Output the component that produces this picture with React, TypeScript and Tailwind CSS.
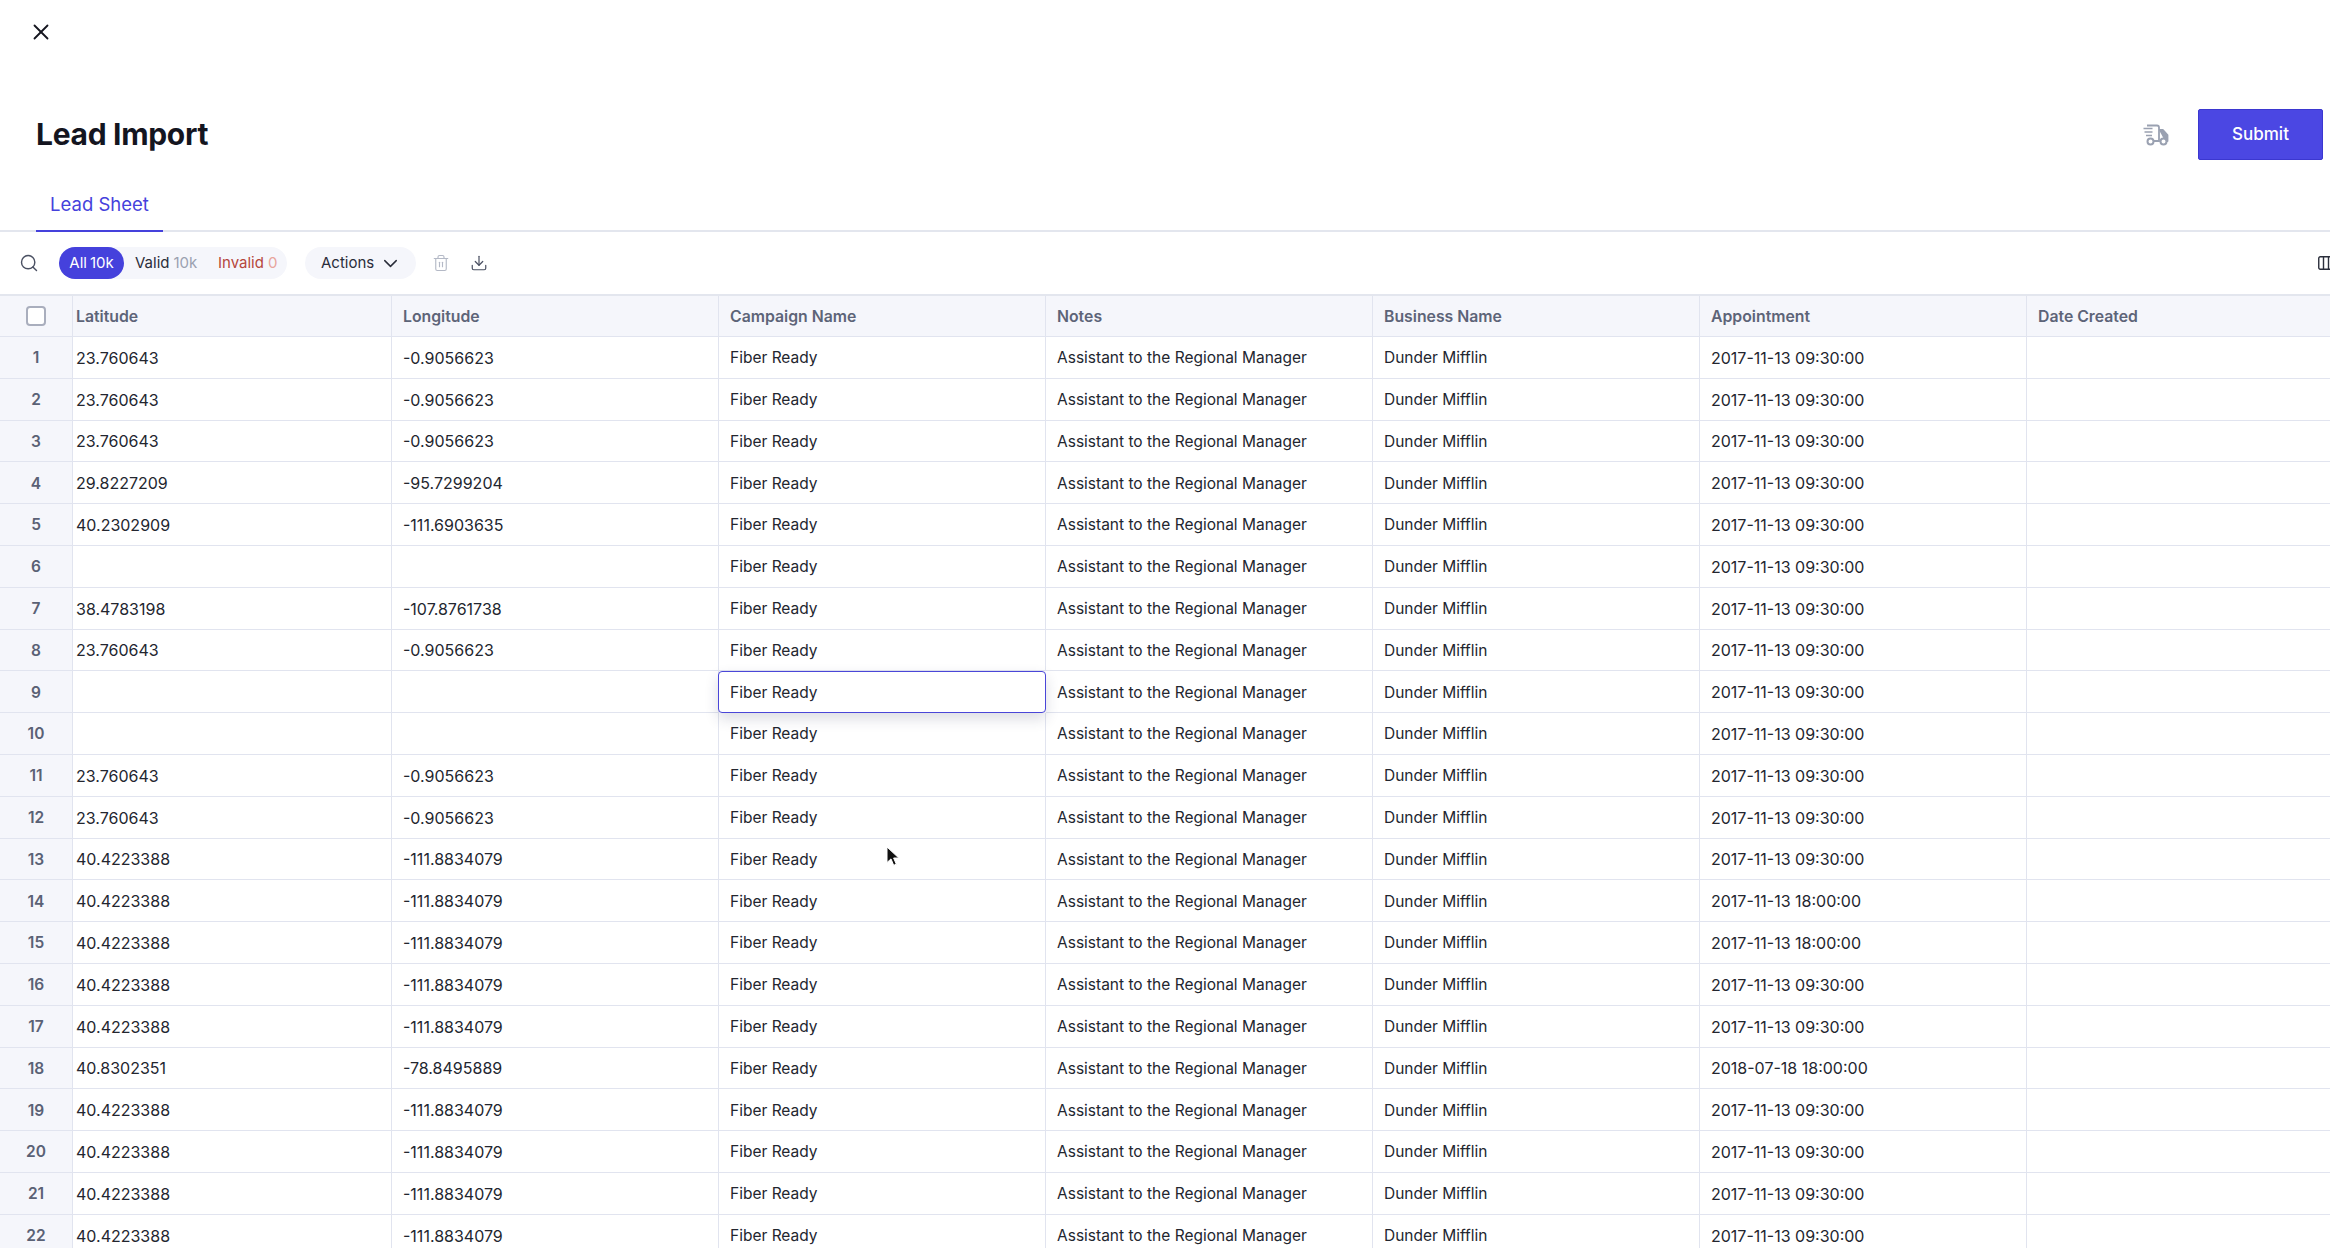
import { ChevronDown, Download, Search, Trash2, X } from "lucide-react";

const columns = [
  "Latitude",
  "Longitude",
  "Campaign Name",
  "Notes",
  "Business Name",
  "Appointment",
  "Date Created",
];

const GRID = "grid shrink-0 grid-cols-[73px_319px_repeat(6,327px)] w-[2354px]";
const SELECTED_ROW = 9;

const a = ["23.760643", "-0.9056623"];
const b = ["40.4223388", "-111.8834079"];
const none = ["", ""];
const coords = [
  a, a, a,
  ["29.8227209", "-95.7299204"],
  ["40.2302909", "-111.6903635"],
  none,
  ["38.4783198", "-107.8761738"],
  a, none, none, a, a,
  b, b, b, b, b,
  ["40.8302351", "-78.8495889"],
  b, b, b, b,
];

function appointmentFor(n: number) {
  if (n === 14 || n === 15) return "2017-11-13 18:00:00";
  if (n === 18) return "2018-07-18 18:00:00";
  return "2017-11-13 09:30:00";
}

function TruckIcon() {
  return (
    <svg width="26" height="22" viewBox="0 0 26 22" fill="none" className="text-[#9aa1b1]">
      <path d="M4 1.5h10a2 2 0 0 1 2 2V17h-6" stroke="currentColor" strokeWidth="1.8" />
      <path d="M16 6h4l4.5 5v6H22" fill="currentColor" stroke="currentColor" strokeWidth="1.8" strokeLinejoin="round" />
      <path d="M0.5 4.5h9M1.5 8h8M3 11.5h6" stroke="currentColor" strokeWidth="1.5" />
      <circle cx="7.5" cy="17.5" r="3" fill="white" stroke="currentColor" strokeWidth="2" />
      <circle cx="20.5" cy="17.5" r="3" fill="white" stroke="currentColor" strokeWidth="2" />
    </svg>
  );
}

function ColumnsIcon() {
  return (
    <svg width="16" height="14" viewBox="0 0 16 14" fill="none" className="shrink-0 text-[#2b2f3c]">
      <rect x="0.75" y="0.75" width="14.5" height="12.5" rx="1.5" stroke="currentColor" strokeWidth="1.4" />
      <path d="M5.5 1v12M10.5 1v12" stroke="currentColor" strokeWidth="1.4" />
    </svg>
  );
}

function Cursor() {
  return (
    <svg width="14" height="22" viewBox="0 0 14 22" className="absolute left-[886px] top-[846px] z-20">
      <path d="M1 1v15.5l4-3.6 2.7 6.4 2.6-1.1-2.7-6.2h5.2z" fill="#111" stroke="#fff" strokeWidth="1" />
    </svg>
  );
}

function Row({ n }: { n: number }) {
  const [lat, lng] = coords[n - 1];
  const cell = "flex items-center px-[11px] pt-px border-r border-b border-[#e1e4ef] text-[15.5px] text-[#23262f]";
  const num = "flex items-center px-[11px] pt-px border-r border-b border-[#e1e4ef] text-[16px] text-[#23262f]";
  return (
    <div className={`${GRID} h-[41.8px]`}>
      <div className="flex items-center justify-center border-r border-b border-[#e1e4ef] bg-[#f5f6fb] pt-px text-[15.5px] font-semibold text-[#5a6175]">
        {n}
      </div>
      <div className={`${num} pl-[3px]`}>{lat}</div>
      <div className={num}>{lng}</div>
      <div
        className={
          n === SELECTED_ROW
            ? "relative z-10 -ml-px flex items-center rounded-[4px] border border-[#4a46d8] bg-white pl-[11px] pt-px text-[15.5px] text-[#23262f] shadow-[0_6px_14px_rgba(40,44,80,0.16)]"
            : cell
        }
      >
        Fiber Ready
      </div>
      <div className={cell}>Assistant to the Regional Manager</div>
      <div className={cell}>Dunder Mifflin</div>
      <div className={num}>{appointmentFor(n)}</div>
      <div className={cell} />
    </div>
  );
}

export default function App() {
  return (
    <div className="relative flex h-[1248px] w-[2330px] flex-col overflow-hidden bg-white font-['Inter',sans-serif]">
      <div className="h-[109px] shrink-0 pl-[28px] pt-[19px]">
        <X size={26} strokeWidth={1.7} className="text-[#14151f]" />
      </div>

      <div className="flex h-[51px] shrink-0 items-center justify-between pl-[36px] pr-[7px]">
        <h1 className="text-[30px] font-bold tracking-[-0.3px] text-[#14151f]">Lead Import</h1>
        <div className="flex items-center gap-[29px]">
          <TruckIcon />
          <button
            type="button"
            className="h-[51px] w-[125px] rounded-[2px] border border-[#3b37d0] bg-[#4b47e3] pt-px text-[17px] font-medium text-white"
          >
            Submit
          </button>
        </div>
      </div>

      <div className="mt-[19px] flex h-[53px] shrink-0 border-b-2 border-[#e3e6ee] pl-[36px]">
        <div className="-mb-[2px] flex w-[127px] items-center justify-center border-b-2 border-[#4541dc] text-[18.5px] text-[#4541dc]">
          Lead Sheet
        </div>
      </div>

      <div className="flex h-[64px] shrink-0 items-center border-b-2 border-[#e3e6ee] pl-[19px] pr-0">
        <Search size={20} strokeWidth={1.7} className="text-[#4a5062]" />
        <div className="ml-[20px] flex h-[32px] w-[228px] items-center rounded-full bg-[#f5f6fb] text-[15px]">
          <div className="flex h-full w-[65px] items-center justify-center gap-[3px] rounded-full bg-[#4541dc] text-white">
            <span>All</span>
            <span>10k</span>
          </div>
          <div className="ml-[11px] flex w-[83px] gap-[4px]">
            <span className="text-[#2a2d3a]">Valid</span>
            <span className="text-[#9ba1b0]">10k</span>
          </div>
          <div className="flex gap-[4px]">
            <span className="text-[#b5473c]">Invalid</span>
            <span className="text-[#e8a49c]">0</span>
          </div>
        </div>
        <div className="ml-[18px] flex h-[32px] w-[111px] items-center gap-[5px] rounded-full bg-[#f5f6fb] pl-[16px] text-[15px] text-[#2a2d3a]">
          Actions
          <ChevronDown size={23} strokeWidth={1.5} />
        </div>
        <Trash2 size={18} strokeWidth={1.5} className="ml-[16px] text-[#b4b9c6]" />
        <Download size={18} strokeWidth={1.6} className="ml-[20px] text-[#4a5062]" />
        <div className="ml-auto flex w-[12px] justify-start overflow-hidden">
          <ColumnsIcon />
        </div>
      </div>

      <div className={`${GRID} h-[41px] bg-[#f5f6fb]`}>
        <div className="flex items-center justify-center border-r border-b border-[#e1e4ef]">
          <span className="h-[20px] w-[20px] rounded-[4px] border-2 border-[#a9aebd] bg-white" />
        </div>
        {columns.map((c, i) => (
          <div
            key={c}
            className={`flex items-center pt-px border-r border-b border-[#e1e4ef] text-[15.8px] font-semibold text-[#5d6478] ${
              i === 0 ? "pl-[3px]" : "pl-[11px]"
            }`}
          >
            {c}
          </div>
        ))}
      </div>

      {coords.map((_, i) => (
        <Row key={i} n={i + 1} />
      ))}

      <Cursor />
    </div>
  );
}
